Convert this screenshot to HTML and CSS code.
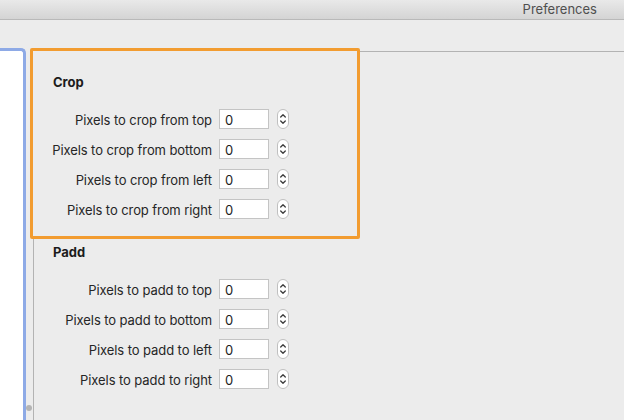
FILE: index.html
```html
<!DOCTYPE html>
<html lang="en">
<head>
<meta charset="utf-8">
<title>Preferences</title>
<link rel="stylesheet" href="styles.css">
</head>
<body>
<div class="window">
  <header class="titlebar"><span class="title">Preferences</span></header>
  <div class="main">
    <aside class="sidebar"></aside>
    <div class="splitter"><span class="knob"></span></div>
    <section class="content">
      <div class="group group-crop">
        <h2 class="group-title">Crop</h2>
        <div class="fields">
          <label class="field-label">Pixels to crop from top</label>
          <input class="field-input" type="text" value="0">
          <span class="stepper"><svg viewBox="0 0 12 20" width="12" height="20"><path d="M3.7 8 L6 5.7 L8.3 8"/><path d="M3.7 12 L6 14.3 L8.3 12"/></svg></span>
          <label class="field-label">Pixels to crop from bottom</label>
          <input class="field-input" type="text" value="0">
          <span class="stepper"><svg viewBox="0 0 12 20" width="12" height="20"><path d="M3.7 8 L6 5.7 L8.3 8"/><path d="M3.7 12 L6 14.3 L8.3 12"/></svg></span>
          <label class="field-label">Pixels to crop from left</label>
          <input class="field-input" type="text" value="0">
          <span class="stepper"><svg viewBox="0 0 12 20" width="12" height="20"><path d="M3.7 8 L6 5.7 L8.3 8"/><path d="M3.7 12 L6 14.3 L8.3 12"/></svg></span>
          <label class="field-label">Pixels to crop from right</label>
          <input class="field-input" type="text" value="0">
          <span class="stepper"><svg viewBox="0 0 12 20" width="12" height="20"><path d="M3.7 8 L6 5.7 L8.3 8"/><path d="M3.7 12 L6 14.3 L8.3 12"/></svg></span>
        </div>
      </div>
      <div class="group group-padd">
        <h2 class="group-title">Padd</h2>
        <div class="fields">
          <label class="field-label">Pixels to padd to top</label>
          <input class="field-input" type="text" value="0">
          <span class="stepper"><svg viewBox="0 0 12 20" width="12" height="20"><path d="M3.7 8 L6 5.7 L8.3 8"/><path d="M3.7 12 L6 14.3 L8.3 12"/></svg></span>
          <label class="field-label">Pixels to padd to bottom</label>
          <input class="field-input" type="text" value="0">
          <span class="stepper"><svg viewBox="0 0 12 20" width="12" height="20"><path d="M3.7 8 L6 5.7 L8.3 8"/><path d="M3.7 12 L6 14.3 L8.3 12"/></svg></span>
          <label class="field-label">Pixels to padd to left</label>
          <input class="field-input" type="text" value="0">
          <span class="stepper"><svg viewBox="0 0 12 20" width="12" height="20"><path d="M3.7 8 L6 5.7 L8.3 8"/><path d="M3.7 12 L6 14.3 L8.3 12"/></svg></span>
          <label class="field-label">Pixels to padd to right</label>
          <input class="field-input" type="text" value="0">
          <span class="stepper"><svg viewBox="0 0 12 20" width="12" height="20"><path d="M3.7 8 L6 5.7 L8.3 8"/><path d="M3.7 12 L6 14.3 L8.3 12"/></svg></span>
        </div>
      </div>
    </section>
  </div>
</div>
</body>
</html>
```

FILE: styles.css
```css
* { box-sizing: border-box; }
html, body {
  margin: 0;
  padding: 0;
  width: 624px;
  height: 420px;
  overflow: hidden;
  background: #ececec;
  font-family: Inter, "Liberation Sans", Arial, sans-serif;
  font-size: 13px;
  color: #242424;
}
.window {
  display: flex;
  flex-direction: column;
  height: 420px;
}
.titlebar {
  height: 20px;
  flex: none;
  display: flex;
  justify-content: flex-end;
  align-items: center;
  padding-right: 27px;
  background: linear-gradient(#e9e9e9, #d4d4d4);
  border-bottom: 1px solid #b9b9b9;
}
.title {
  color: #4f4f4f;
  line-height: 19px;
}
.main {
  flex: 1;
  display: flex;
  min-height: 0;
}
.sidebar {
  width: 26px;
  flex: none;
  margin-top: 28px;
  background: #fff;
  border-top: 3px solid #8eaae6;
  border-right: 3px solid #8eaae6;
  border-top-right-radius: 5px;
}
.splitter {
  width: 7px;
  flex: none;
  display: flex;
  align-items: flex-end;
  justify-content: center;
  padding-bottom: 9px;
}
.knob {
  width: 6px;
  height: 6px;
  border-radius: 50%;
  background: #b4b4b4;
  margin-left: -2px;
}
.content {
  flex: 1;
  margin-top: 31px;
  border-top: 1px solid #b3b3b3;
  border-left: 1px solid #b3b3b3;
}
.group-crop {
  width: 330px;
  margin: -4px 0 0 -4px;
  padding: 23px 0 17px 20px;
  border: 3px solid #f29c30;
  border-radius: 2px;
  background: #ececec;
}
.group-padd {
  margin-top: 5px;
  padding-left: 19px;
}
.group-title {
  margin: 0 0 19px;
  font-size: 13px;
  line-height: 16px;
  font-weight: 700;
  color: #1c1c1c;
}
.fields {
  display: grid;
  grid-template-columns: 159px 50px 12px;
  column-gap: 7px;
  row-gap: 10px;
  grid-auto-rows: 20px;
  align-items: center;
}
.field-label {
  display: flex;
  justify-content: flex-end;
  white-space: nowrap;
  line-height: 20px;
  padding-top: 2px;
  letter-spacing: -0.08px;
  color: #262626;
}
.field-input {
  width: 50px;
  height: 20px;
  margin: 0;
  padding: 2px 0 0 5px;
  border: 1px solid #c4c4c4;
  border-radius: 0;
  background: #fff;
  font: 13px Inter, "Liberation Sans", Arial, sans-serif;
  color: #222;
  outline: none;
}
.stepper {
  width: 12px;
  height: 20px;
  margin-left: 1px;
  border: 1px solid #c0c0c0;
  border-radius: 6px;
  background: #fff;
  display: flex;
  align-items: center;
  justify-content: center;
}
.stepper svg {
  display: block;
  flex: none;
  margin: -1px;
}
.stepper path {
  fill: none;
  stroke: #3c3c3c;
  stroke-width: 1.3;
  stroke-linecap: round;
  stroke-linejoin: round;
}
```
